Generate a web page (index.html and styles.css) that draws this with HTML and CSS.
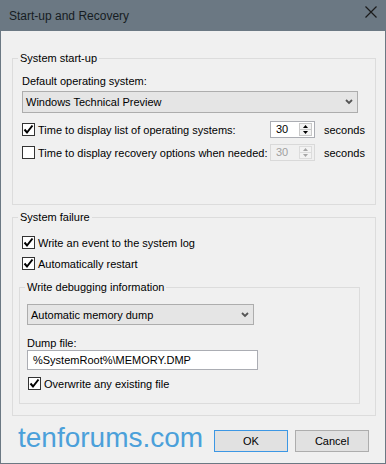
FILE: index.html
```html
<!DOCTYPE html>
<html>
<head>
<meta charset="utf-8">
<link rel="stylesheet" href="styles.css">
</head>
<body>
<div class="window">
  <div class="titlebar">
    <span class="title">Start-up and Recovery</span>
    <svg class="close" width="12" height="12" viewBox="0 0 12 12"><path d="M0.5 0.5L11.5 11.5M11.5 0.5L0.5 11.5" stroke="#1b1b1b" stroke-width="1.2" fill="none"/></svg>
  </div>
  <div class="content">
    <div class="group group-startup">
      <span class="legend">System start-up</span>
      <div class="label">Default operating system:</div>
      <div class="select select-os">
        <span>Windows Technical Preview</span>
        <svg width="8" height="6" viewBox="0 0 8 6"><path d="M1 1L4 4L7 1" stroke="#555" stroke-width="1.8" fill="none"/></svg>
      </div>
      <div class="row row-first">
        <span class="check"><svg width="11" height="11" viewBox="0 0 11 11"><path d="M1.5 5.5L4 8.5L9.5 1.5" stroke="#000" stroke-width="2" fill="none"/></svg></span>
        <span class="row-label">Time to display list of operating systems:</span>
        <div class="spin">
          <span class="spin-value">30</span>
          <div class="spin-btns">
            <span class="spin-btn"><svg width="5" height="3" viewBox="0 0 5 3"><path d="M0 3L2.5 0L5 3Z" fill="#000"/></svg></span>
            <span class="spin-btn"><svg width="5" height="3" viewBox="0 0 5 3"><path d="M0 0L2.5 3L5 0Z" fill="#000"/></svg></span>
          </div>
        </div>
        <span class="unit">seconds</span>
      </div>
      <div class="row row-second">
        <span class="check"></span>
        <span class="row-label">Time to display recovery options when needed:</span>
        <div class="spin spin-disabled">
          <span class="spin-value">30</span>
          <div class="spin-btns">
            <span class="spin-btn"><svg width="5" height="3" viewBox="0 0 5 3"><path d="M0 3L2.5 0L5 3Z" fill="#a6a6a6"/></svg></span>
            <span class="spin-btn"><svg width="5" height="3" viewBox="0 0 5 3"><path d="M0 0L2.5 3L5 0Z" fill="#a6a6a6"/></svg></span>
          </div>
        </div>
        <span class="unit">seconds</span>
      </div>
    </div>

    <div class="group group-failure">
      <span class="legend">System failure</span>
      <div class="row row-check">
        <span class="check"><svg width="11" height="11" viewBox="0 0 11 11"><path d="M1.5 5.5L4 8.5L9.5 1.5" stroke="#000" stroke-width="2" fill="none"/></svg></span>
        <span>Write an event to the system log</span>
      </div>
      <div class="row row-check row-restart">
        <span class="check"><svg width="11" height="11" viewBox="0 0 11 11"><path d="M1.5 5.5L4 8.5L9.5 1.5" stroke="#000" stroke-width="2" fill="none"/></svg></span>
        <span>Automatically restart</span>
      </div>
      <div class="group group-debug">
        <span class="legend">Write debugging information</span>
        <div class="select select-dump">
          <span>Automatic memory dump</span>
          <svg width="8" height="6" viewBox="0 0 8 6"><path d="M1 1L4 4L7 1" stroke="#555" stroke-width="1.8" fill="none"/></svg>
        </div>
        <div class="label label-dump">Dump file:</div>
        <div class="textfield">%SystemRoot%\MEMORY.DMP</div>
        <div class="row row-check row-overwrite">
          <span class="check"><svg width="11" height="11" viewBox="0 0 11 11"><path d="M1.5 5.5L4 8.5L9.5 1.5" stroke="#000" stroke-width="2" fill="none"/></svg></span>
          <span>Overwrite any existing file</span>
        </div>
      </div>
    </div>
  </div>
  <div class="footer">
    <span class="watermark">tenforums.com</span>
    <div class="buttons">
      <span class="button button-default">OK</span>
      <span class="button">Cancel</span>
    </div>
  </div>
</div>
</body>
</html>
```

FILE: styles.css
```css
* { box-sizing: border-box; }
html, body { margin: 0; padding: 0; }
body {
  font-family: "Liberation Sans", Arial, sans-serif;
  font-size: 11px;
  color: #000;
  background: #f0f0f0;
}
.window {
  width: 386px;
  height: 464px;
  border: 1px solid #6b7883;
  border-top: none;
  background: #f0f0f0;
  display: flex;
  flex-direction: column;
}
.titlebar {
  height: 31px;
  background: #6b7883;
  display: flex;
  justify-content: space-between;
  align-items: center;
  padding: 0 8px 0 8px;
}
.title {
  font-size: 12px;
  color: #161c22;
}
.close {
  align-self: flex-start;
  margin-top: 6px;
}
.content {
  padding: 27px 0 0 11px;
}
.group {
  position: relative;
  border: 1px solid #dcdcdc;
}
.legend {
  position: absolute;
  top: -8px;
  left: 5px;
  padding: 0 2px;
  line-height: 14px;
  background: #f0f0f0;
}
.group-startup {
  width: 364px;
  height: 147px;
  padding: 15px 0 0 9px;
}
.label {
  line-height: 14px;
}
.select {
  display: flex;
  justify-content: space-between;
  align-items: center;
  border: 1px solid #adadad;
  background: #e5e5e5;
  padding: 0 4px 0 3px;
}
.select-os {
  margin-top: 3px;
  width: 336px;
  height: 22px;
}
.row {
  display: flex;
  align-items: center;
}
.row-first {
  margin-top: 8px;
  height: 17px;
}
.row-second {
  margin-top: 6px;
  height: 17px;
}
.check {
  width: 13px;
  height: 13px;
  border: 1px solid #333;
  background: #fff;
  margin-right: 3px;
  flex: none;
  display: flex;
  align-items: center;
  justify-content: center;
}
.row-label {
  width: 232px;
}
.spin {
  display: flex;
  width: 45px;
  height: 17px;
  border: 1px solid #abadb3;
  background: #fff;
}
.spin-value {
  flex: 1;
  padding-left: 5px;
  line-height: 15px;
}
.spin-btns {
  width: 13px;
  margin: 1px 2px 1px 0;
  border: 1px solid #c9c9c9;
  display: flex;
  flex-direction: column;
  background: #f3f3f3;
}
.spin-btn {
  flex: 1;
  display: flex;
  align-items: center;
  justify-content: center;
}
.spin-btn + .spin-btn {
  border-top: 1px solid #c9c9c9;
}
.spin-disabled {
  border-color: #d9d9d9;
  color: #a0a0a0;
  background: #f0f0f0;
}
.spin-disabled .spin-btns {
  border-color: #dcdcdc;
}
.spin-disabled .spin-btn + .spin-btn {
  border-top-color: #dcdcdc;
}
.unit {
  margin-left: 9px;
}
.group-failure {
  margin-top: 12px;
  width: 364px;
  height: 199px;
  padding: 18px 0 0 9px;
}
.row-check {
  height: 13px;
}
.row-restart {
  margin-top: 8px;
}
.group-debug {
  margin: 17px 0 0 -3px;
  width: 341px;
  height: 117px;
  padding: 16px 0 0 7px;
}
.select-dump {
  width: 227px;
  height: 21px;
}
.label-dump {
  margin-top: 11px;
}
.textfield {
  width: 231px;
  height: 20px;
  border: 1px solid #abadb3;
  background: #fff;
  padding-left: 5px;
  line-height: 18px;
  margin-top: 0;
}
.row-overwrite {
  margin: 7px 0 0 1px;
}
.footer {
  display: flex;
  justify-content: space-between;
  align-items: flex-start;
  padding: 14px 16px 0 17px;
}
.watermark {
  font-size: 28px;
  line-height: 22px;
  margin-top: -3px;
  color: #4ba0da;
}
.buttons {
  display: flex;
  gap: 7px;
}
.button {
  width: 74px;
  height: 22px;
  border: 1px solid #adadad;
  background: #e1e1e1;
  display: flex;
  align-items: center;
  justify-content: center;
}
.button-default {
  border-color: #3c97e4;
}
```
